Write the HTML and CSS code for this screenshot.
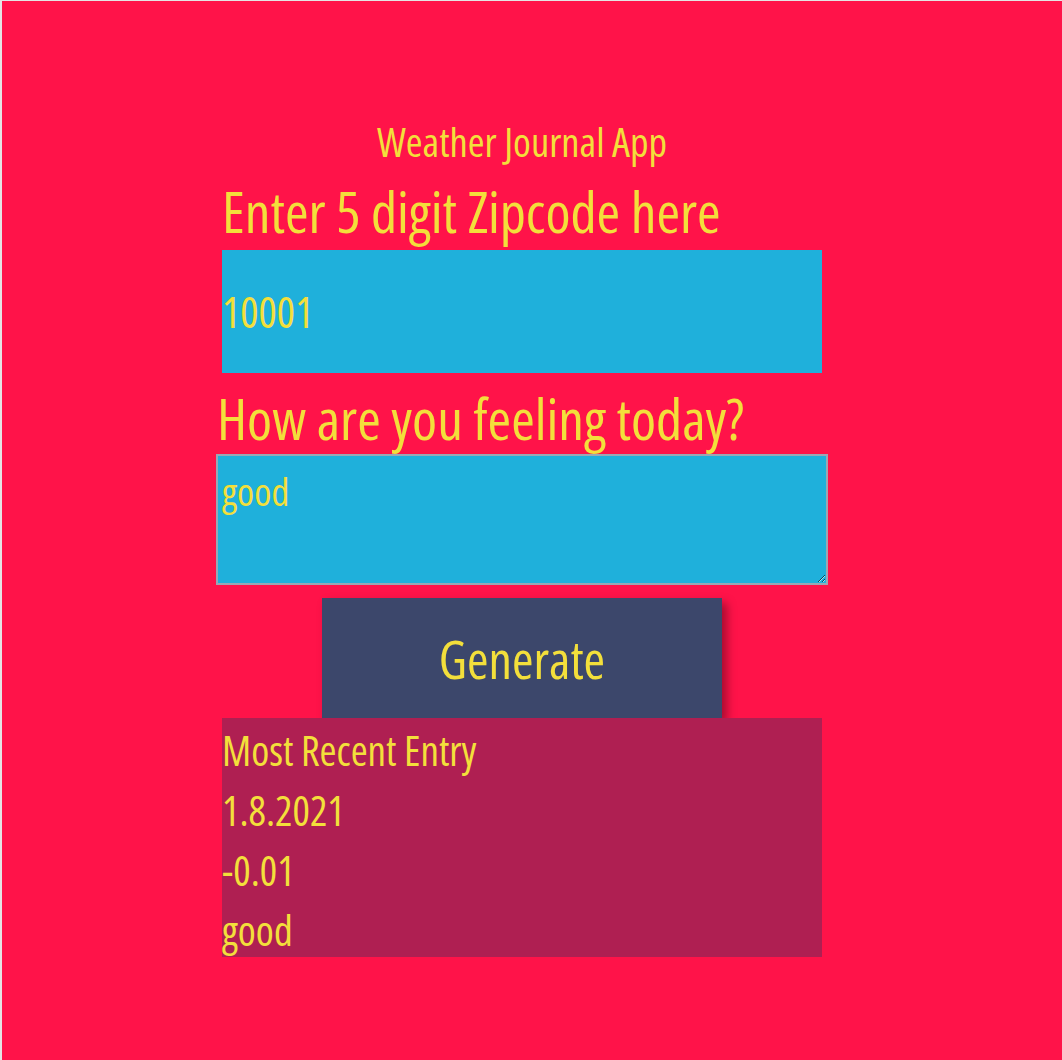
FILE: index.html
```html
<!DOCTYPE html>
<html lang="en">
<head>
<meta charset="utf-8">
<title>Weather Journal App</title>
<link rel="stylesheet" href="styles.css">
</head>
<body>
<main class="app">
  <h1 class="title">Weather Journal App</h1>
  <label class="label" for="zip">Enter 5 digit Zipcode here</label>
  <input class="zip" id="zip" type="text" value="10001">
  <label class="label label-feel" for="feelings">How are you feeling today?</label>
  <textarea class="feel" id="feelings" rows="3">good</textarea>
  <div class="actions"><button class="generate" type="button">Generate</button></div>
  <section class="entry">
    <div class="entry-title">Most Recent Entry</div>
    <div class="entry-line">1.8.2021</div>
    <div class="entry-line">-0.01</div>
    <div class="entry-line">good</div>
  </section>
</main>
</body>
</html>
```
FILE: styles.css
```css
html {
  border-top: 1px solid #e4e4e4;
  border-left: 2px solid #e4e4e4;
}
body {
  margin: 0;
  background: #ff1349;
  color: #f3df3b;
  font-family: "Open Sans", "DejaVu Sans Condensed", sans-serif;
  font-stretch: 75%;
  font-weight: 500;
  min-height: 1059px;
}
.app {
  width: 600px;
  margin-left: 220px;
  padding-top: 116px;
  display: flex;
  flex-direction: column;
  white-space: nowrap;
}
.title {
  margin: 0 0 14px;
  font-size: 40.5px;
  font-weight: 500;
  line-height: 50px;
  text-align: center;
}
.label {
  display: block;
  font-size: 57px;
  line-height: 60px;
  margin-bottom: 9px;
}
.zip {
  box-sizing: border-box;
  width: 600px;
  height: 123px;
  margin: 0;
  padding: 0;
  border: none;
  background: #1fb0db;
  color: #f3df3b;
  font-family: inherit;
  font-stretch: inherit;
  font-weight: inherit;
  font-size: 43px;
}
.label-feel {
  margin: 15px 0 6px -5px;
}
.feel {
  box-sizing: border-box;
  width: 612px;
  height: 131px;
  margin: 0 0 0 -6px;
  padding: 13px 4px 4px;
  border: 2px solid #9aa7b4;
  background: #1fb0db;
  color: #f3df3b;
  font-family: inherit;
  font-stretch: inherit;
  font-weight: inherit;
  font-size: 39px;
  line-height: 1.15;
  resize: both;
}
.actions {
  display: flex;
  justify-content: center;
  margin-top: 13px;
}
.generate {
  width: 400px;
  height: 120px;
  margin: 0;
  border: none;
  background: #3c476b;
  color: #f3df3b;
  font-family: inherit;
  font-stretch: inherit;
  font-weight: inherit;
  font-size: 52px;
  box-shadow: 5px 5px 9px rgba(0, 0, 0, 0.35);
}
.entry {
  height: 239px;
  padding-top: 2px;
  box-sizing: border-box;
  background: #af1f52;
  font-size: 41px;
}
.entry-title,
.entry-line {
  line-height: 60px;
}
```
